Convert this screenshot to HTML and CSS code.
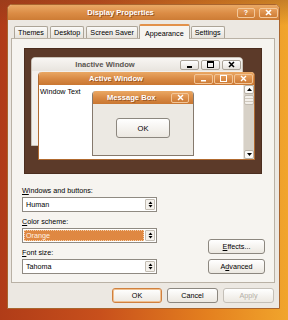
FILE: index.html
```html
<!DOCTYPE html>
<html lang="en">
<head>
<meta charset="UTF-8">
<title>Display Properties</title>
<link rel="stylesheet" href="styles.css">
</head>
<body>

<div class="dialog">
    <div class="titlebar">
        <span class="title">Display Properties</span>
        <span class="tbtn help">?</span>
        <span class="tbtn close">
            <svg width="7" height="7" viewBox="0 0 7 7"><path d="M1 1L6 6M6 1L1 6" stroke="#fff" stroke-width="1.6"/></svg>
        </span>
    </div>

    <div class="dialog-body">
        <div class="tabs">
            <div class="tab">Themes</div>
            <div class="tab">Desktop</div>
            <div class="tab">Screen Saver</div>
            <div class="tab active">Appearance</div>
            <div class="tab">Settings</div>
        </div>

        <div class="panel">
            <div class="preview">
                <!-- inactive window -->
                <div class="win inactive">
                    <div class="win-title">
                        <span class="win-name">Inactive Window</span>
                        <span class="wbtn"><svg width="7" height="7" viewBox="0 0 7 7"><rect x="1" y="5" width="5" height="2"/></svg></span>
                        <span class="wbtn"><svg width="7" height="7" viewBox="0 0 7 7"><rect x="0.5" y="0.5" width="6" height="6" fill="none" stroke="#000"/><rect x="0" y="0" width="7" height="2"/></svg></span>
                        <span class="wbtn"><svg width="7" height="7" viewBox="0 0 7 7"><path d="M1 1L6 6M6 1L1 6" stroke="#000" stroke-width="1.5"/></svg></span>
                    </div>
                </div>

                <!-- active window -->
                <div class="win active-win">
                    <div class="win-title">
                        <span class="win-name">Active Window</span>
                        <span class="wbtn orange"><svg width="7" height="7" viewBox="0 0 7 7"><rect x="1" y="5" width="5" height="1.5" fill="#fff"/></svg></span>
                        <span class="wbtn orange"><svg width="7" height="7" viewBox="0 0 7 7"><rect x="0.5" y="0.5" width="6" height="6" fill="none" stroke="#fff"/></svg></span>
                        <span class="wbtn orange"><svg width="7" height="7" viewBox="0 0 7 7"><path d="M1 1L6 6M6 1L1 6" stroke="#fff" stroke-width="1.4"/></svg></span>
                    </div>
                    <div class="win-body">
                        <div class="win-text">Window Text</div>
                        <div class="scrollbar">
                            <span class="sb-btn"><svg width="5" height="3" viewBox="0 0 5 3"><path d="M0 3L2.5 0L5 3z"/></svg></span>
                            <span class="sb-thumb"></span>
                            <span class="sb-track"></span>
                            <span class="sb-btn"><svg width="5" height="3" viewBox="0 0 5 3"><path d="M0 0L2.5 3L5 0z"/></svg></span>
                        </div>
                    </div>
                </div>

                <!-- message box -->
                <div class="win msgbox">
                    <div class="win-title">
                        <span class="win-name msg-name">Message Box</span>
                        <span class="wbtn orange msg-close"><svg width="7" height="7" viewBox="0 0 7 7"><path d="M1 1L6 6M6 1L1 6" stroke="#fff" stroke-width="1.4"/></svg></span>
                    </div>
                    <div class="msg-body">
                        <span class="btn msg-ok">OK</span>
                    </div>
                </div>
            </div>

            <div class="options">
                <div class="fields">
                    <label class="field-label"><u>W</u>indows and buttons:</label>
                    <div class="select">
                        <span class="select-value">Human</span>
                        <span class="spin"><svg width="5" height="7" viewBox="0 0 5 7"><path d="M0.5 3L2.5 0.5L4.5 3zM0.5 4L2.5 6.5L4.5 4z"/></svg></span>
                    </div>

                    <label class="field-label"><u>C</u>olor scheme:</label>
                    <div class="select">
                        <span class="select-value selected">Orange</span>
                        <span class="spin"><svg width="5" height="7" viewBox="0 0 5 7"><path d="M0.5 3L2.5 0.5L4.5 3zM0.5 4L2.5 6.5L4.5 4z"/></svg></span>
                    </div>

                    <label class="field-label"><u>F</u>ont size:</label>
                    <div class="select">
                        <span class="select-value">Tahoma</span>
                        <span class="spin"><svg width="5" height="7" viewBox="0 0 5 7"><path d="M0.5 3L2.5 0.5L4.5 3zM0.5 4L2.5 6.5L4.5 4z"/></svg></span>
                    </div>
                </div>

                <div class="side-btns">
                    <span class="btn side-btn"><u>E</u>ffects...</span>
                    <span class="btn side-btn">A<u>d</u>vanced</span>
                </div>
            </div>
        </div>

        <div class="actions">
            <span class="btn action default">OK</span>
            <span class="btn action">Cancel</span>
            <span class="btn action disabled">Apply</span>
        </div>
    </div>
</div>

</body>
</html>
```

FILE: styles.css
```css
* {
    margin: 0;
    padding: 0;
    box-sizing: border-box;
}
body {
    width: 288px;
    height: 320px;
    overflow: hidden;
    padding: 4px 0 0 7px;
    font-family: 'Liberation Sans', Arial, sans-serif;
    font-size: 7.2px;
    color: #000;
    background:
        linear-gradient(rgba(120, 60, 30, 0.35), rgba(120, 60, 30, 0) 8%),
        linear-gradient(90deg, #b03c18 0%, #c8501c 35%, #e4801f 72%, #f1a52c 100%);
}

/* main dialog */
.dialog {
    width: 273px;
    height: 305px;
    border: 1px solid #a9652e;
    border-radius: 5px 5px 0 0;
    background: #ece8e2;
    display: flex;
    flex-direction: column;
    overflow: hidden;
}
.titlebar {
    height: 15px;
    display: flex;
    align-items: center;
    padding-right: 1px;
    background: linear-gradient(#eaa965, #db8c45 55%, #cd7c35);
}
.title {
    flex: 1;
    text-align: center;
    color: #fff;
    font-weight: bold;
    font-size: 7.6px;
    text-shadow: 1px 1px 0 #9c5622;
}
.tbtn {
    width: 18px;
    height: 10px;
    margin-left: 4px;
    border: 1px solid #f3c89a;
    border-radius: 2px;
    background: linear-gradient(#e79f5c, #cf7d36);
    color: #fff;
    font-weight: bold;
    font-size: 7px;
    line-height: 8px;
    display: flex;
    align-items: center;
    justify-content: center;
}
.tbtn.close {
    width: 19px;
}

.dialog-body {
    flex: 1;
    padding: 4px 4px 0 3px;
    display: flex;
    flex-direction: column;
}

/* tabs */
.tabs {
    height: 14px;
    display: flex;
    align-items: flex-end;
    padding-left: 3px;
    gap: 2px;
    position: relative;
    z-index: 1;
}
.tab {
    height: 12px;
    padding: 0 3px;
    line-height: 11px;
    border: 1px solid #aca497;
    border-bottom: none;
    border-radius: 2px 2px 0 0;
    background: linear-gradient(#fbfaf8, #e6e2db);
}
.tab.active {
    height: 15px;
    margin: 0 -1px -1px;
    padding: 2px 5px 0;
    background: #f6f4f0;
    border-top: 2px solid #e2914a;
}

.panel {
    height: 245px;
    border: 1px solid #b9b1a5;
    background: #f6f4f0;
    padding: 9px 9px 0 12px;
}

/* appearance preview */
.preview {
    width: 238px;
    height: 126px;
    position: relative;
    background: #5c3a29;
    border: 1px solid #4b2e1f;
}
.win {
    position: absolute;
    display: flex;
    flex-direction: column;
    border-radius: 4px 4px 0 0;
    overflow: hidden;
}
.win-title {
    height: 13px;
    flex: none;
    display: flex;
    align-items: center;
    padding-right: 1px;
}
.win-name {
    flex: 1;
    text-align: center;
    font-weight: bold;
    font-size: 7.6px;
}
.wbtn {
    width: 19px;
    height: 10px;
    margin-left: 2px;
    border: 1px solid #aaa398;
    border-radius: 2px;
    background: linear-gradient(#ffffff, #e6e2dc);
    display: flex;
    align-items: center;
    justify-content: center;
}
.wbtn.orange {
    border-color: #f2c597;
    background: linear-gradient(#e8a05d, #cd7b35);
}

.inactive {
    left: 6px;
    top: 8px;
    width: 212px;
    height: 89px;
    background: #f3f0ec;
    border: 1px solid #c9c2b7;
}
.inactive .win-title {
    background: linear-gradient(#f8f6f3, #e8e4de);
}
.inactive .win-name {
    color: #5a5650;
}

.active-win {
    left: 13px;
    top: 23px;
    width: 217px;
    height: 88px;
    border: 1px solid #b06a30;
    border-top: none;
    background: #fff;
}
.active-win .win-title,
.msgbox .win-title {
    background: linear-gradient(#eaa864, #d88842 55%, #c97732);
}
.active-win .win-name,
.msgbox .win-name {
    color: #fff;
    text-shadow: 1px 1px 0 #9c5622;
}
.active-win .wbtn {
    margin-left: 1px;
}
.win-body {
    flex: 1;
    display: flex;
    background: #fff;
}
.win-text {
    flex: 1;
    padding: 2px 1px;
}
.scrollbar {
    width: 11px;
    display: flex;
    flex-direction: column;
    background: #d7d1c7;
    border-left: 1px solid #e8e4de;
}
.sb-btn {
    height: 9px;
    border: 1px solid #b7b0a5;
    border-radius: 2px;
    background: #fbfaf8;
    display: flex;
    align-items: center;
    justify-content: center;
}
.sb-thumb {
    height: 10px;
    margin-top: 1px;
    border: 1px solid #c2bbb0;
    border-radius: 2px;
    background: repeating-linear-gradient(#f2efea 0 2px, #cfc8bd 2px 3px);
}
.sb-track {
    flex: 1;
}

.msgbox {
    left: 67px;
    top: 42px;
    width: 102px;
    height: 65px;
    border: 1px solid #85796d;
    border-top: none;
    background: #ece9e3;
}
.msg-name {
    text-align: left;
    padding-left: 14px;
}
.msgbox .msg-close {
    width: 18px;
    margin-right: 3px;
}
.msg-body {
    flex: 1;
    padding: 14px 0 0 23px;
}

/* buttons */
.btn {
    display: flex;
    align-items: center;
    justify-content: center;
    border: 1px solid #8c877f;
    border-radius: 3px;
    background: linear-gradient(#ffffff, #ece8e1);
}
.msg-ok {
    width: 54px;
    height: 20px;
    font-size: 7.6px;
}

/* options */
.options {
    display: flex;
    justify-content: space-between;
    align-items: flex-end;
    margin-left: -2px;
}
.fields {
    width: 135px;
}
.field-label {
    display: block;
    line-height: 9px;
    margin: 5px 0 2px;
}
.field-label:first-child {
    margin-top: 12px;
}
.select {
    height: 15px;
    display: flex;
    align-items: stretch;
    border: 1px solid #8f8a82;
    background: #fff;
    padding: 1px;
}
.select-value {
    flex: 1;
    padding-left: 2px;
    line-height: 11px;
}
.select-value.selected {
    background: #df8842;
    color: #fff3e6;
    outline: 1px dotted #f6d2ae;
    outline-offset: -1px;
}
.spin {
    width: 10px;
    margin-left: 1px;
    border: 1px solid #c3bdb3;
    border-radius: 1px;
    background: #f4f1ec;
    display: flex;
    align-items: center;
    justify-content: center;
}
.side-btns {
    display: flex;
    flex-direction: column;
    gap: 5px;
}
.side-btn {
    width: 57px;
    height: 15px;
}

.actions {
    display: flex;
    justify-content: flex-end;
    gap: 5px;
    margin-top: 5px;
    padding-right: 1px;
}
.action {
    width: 51px;
    height: 15px;
}
.action.default {
    width: 50px;
    border-color: #d0803e;
    box-shadow: inset 0 0 0 1px #f0c090;
}
.action.disabled {
    color: #b3aea6;
    border-color: #c4bfb7;
}
```
